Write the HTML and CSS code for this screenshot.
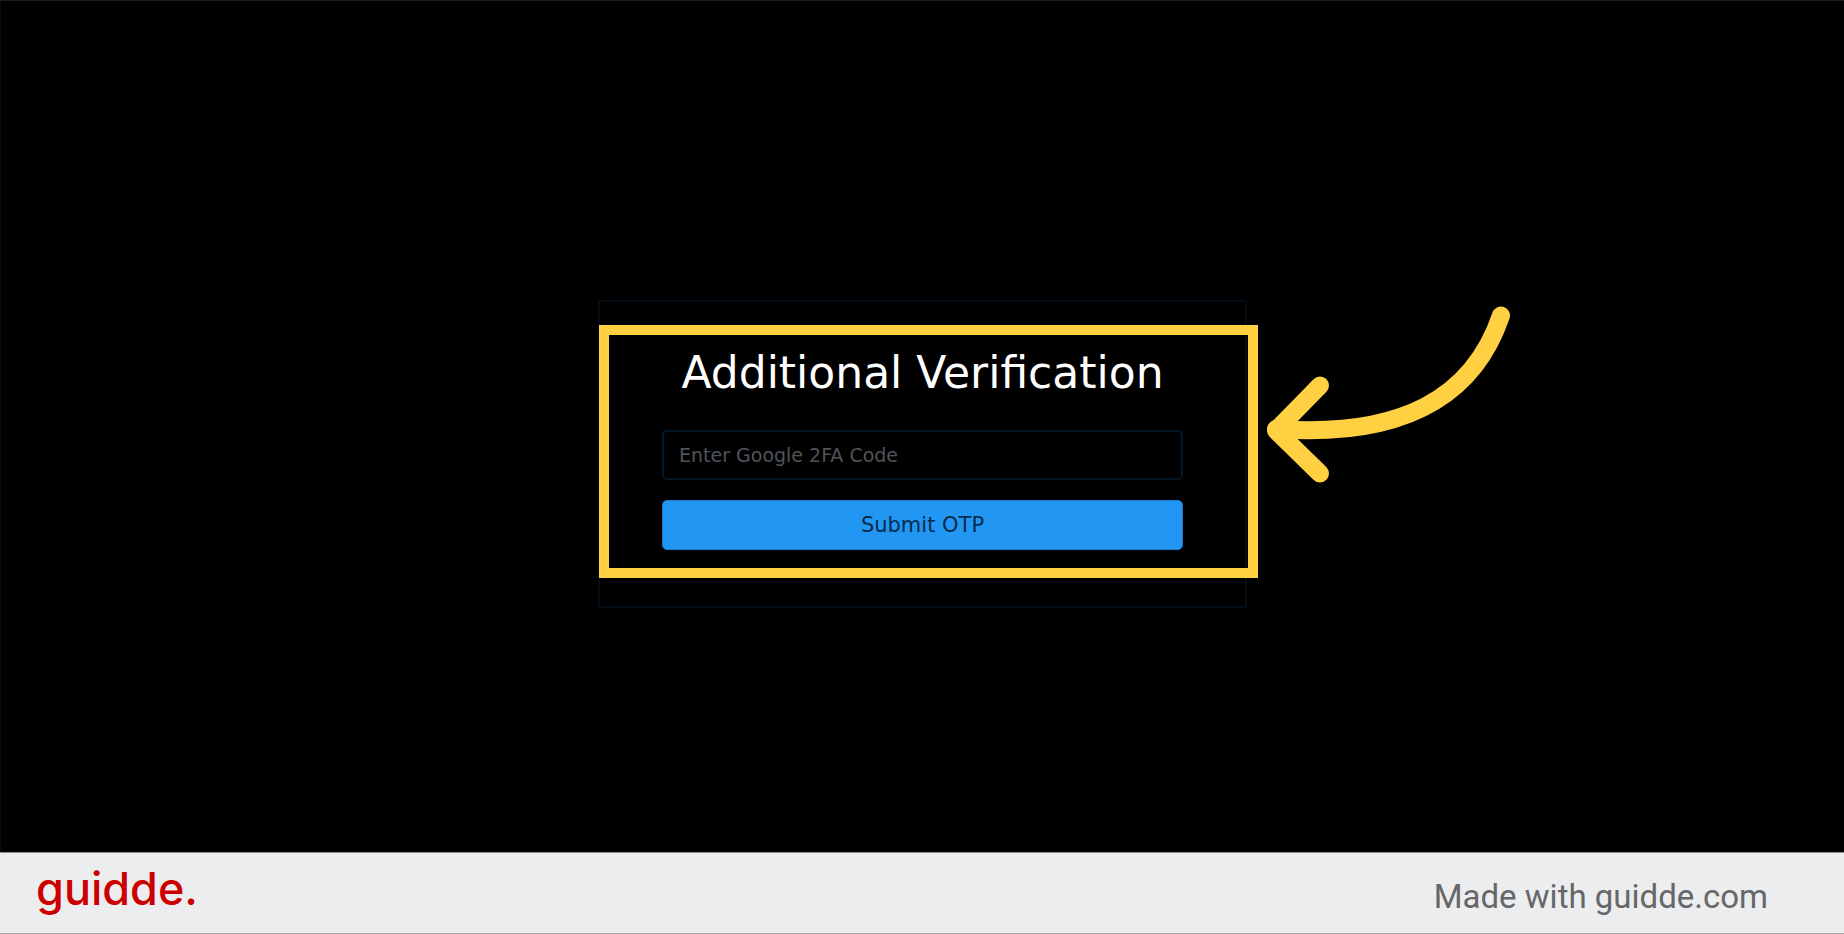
FILE: index.html
```html
<!DOCTYPE html>
<html lang="en">
<head>
  <meta charset="UTF-8" />
  <meta name="viewport" content="width=device-width, initial-scale=1.0"/>
  <title>Additional Verification</title>
  <link rel="stylesheet" href="styles.css">
</head>
<body>
  <main class="stage">
    <form class="card">
      <h1 class="title">Additional Verification</h1>
      <input class="code-input" type="text" placeholder="Enter Google 2FA Code" aria-label="Enter Google 2FA Code">
      <button class="submit" type="button">Submit OTP</button>

      <!-- callout drawn over the form -->
      <div class="highlight"></div>
      <svg class="arrow" viewBox="0 0 260 190" fill="none" stroke="#ffd042" stroke-width="18" stroke-linecap="round" stroke-linejoin="round">
        <path d="M241 15.500C213 98 142 138 16 129"/>
        <path d="M60 85.500L16 130.500L60 173.500"/>
      </svg>
    </form>
  </main>

  <footer class="footer">
    <span class="logo">guidde.</span>
    <span class="made-with">Made with guidde.com</span>
  </footer>
</body>
</html>
```

FILE: styles.css
```css
* {
  box-sizing: border-box;
}
body {
  margin: 0;
  min-height: 100vh;
  display: flex;
  flex-direction: column;
  background: #000;
  font-family: 'DejaVu Sans', sans-serif;
}
.stage {
  flex: 1;
  display: flex;
  justify-content: center;
  align-items: center;
  padding-top: 54px;
  border-top: 1px solid #1b1f1f;
  border-left: 1px solid #0c0e0e;
}
.card {
  position: relative;
  display: flex;
  flex-direction: column;
  width: 649px;
  padding: 44px 62px 56px;
  border: 2px solid #020c14;
}
.title {
  margin: 0 0 30px;
  color: #fff;
  font-size: 44px;
  font-weight: 400;
  line-height: 54px;
  text-align: center;
}
.code-input {
  height: 50px;
  margin-bottom: 20px;
  padding: 0 15px;
  border: 2px solid #041726;
  border-radius: 5px;
  background: #000;
  color: #fff;
  font-family: inherit;
  font-size: 19px;
}
.code-input::placeholder {
  color: #4f545a;
  opacity: 1;
}
.submit {
  height: 50px;
  padding: 0;
  border: 1px solid #1b7ccc;
  border-radius: 5px;
  background: #2196f3;
  color: #062b4b;
  font-family: inherit;
  font-size: 21px;
  cursor: pointer;
}
.highlight {
  position: absolute;
  top: 23px;
  left: -1px;
  width: 659px;
  height: 253px;
  border: 10px solid #ffd042;
  pointer-events: none;
}
.arrow {
  position: absolute;
  top: -2px;
  left: 660px;
  width: 260px;
  height: 190px;
  pointer-events: none;
}
.footer {
  display: flex;
  justify-content: space-between;
  align-items: center;
  height: 82px;
  padding: 0 76px 0 36px;
  border-top: 1px solid #8e8f90;
  border-bottom: 1px solid #a9a9a9;
  background: #ecedef;
}
.logo {
  padding-bottom: 8px;
  color: #c00;
  font-family: Inter, sans-serif;
  font-size: 45px;
  font-weight: 500;
  line-height: 56px;
}
.made-with {
  padding-top: 8px;
  color: #666769;
  font-family: Roboto, sans-serif;
  font-size: 33px;
  line-height: 40px;
}
```
